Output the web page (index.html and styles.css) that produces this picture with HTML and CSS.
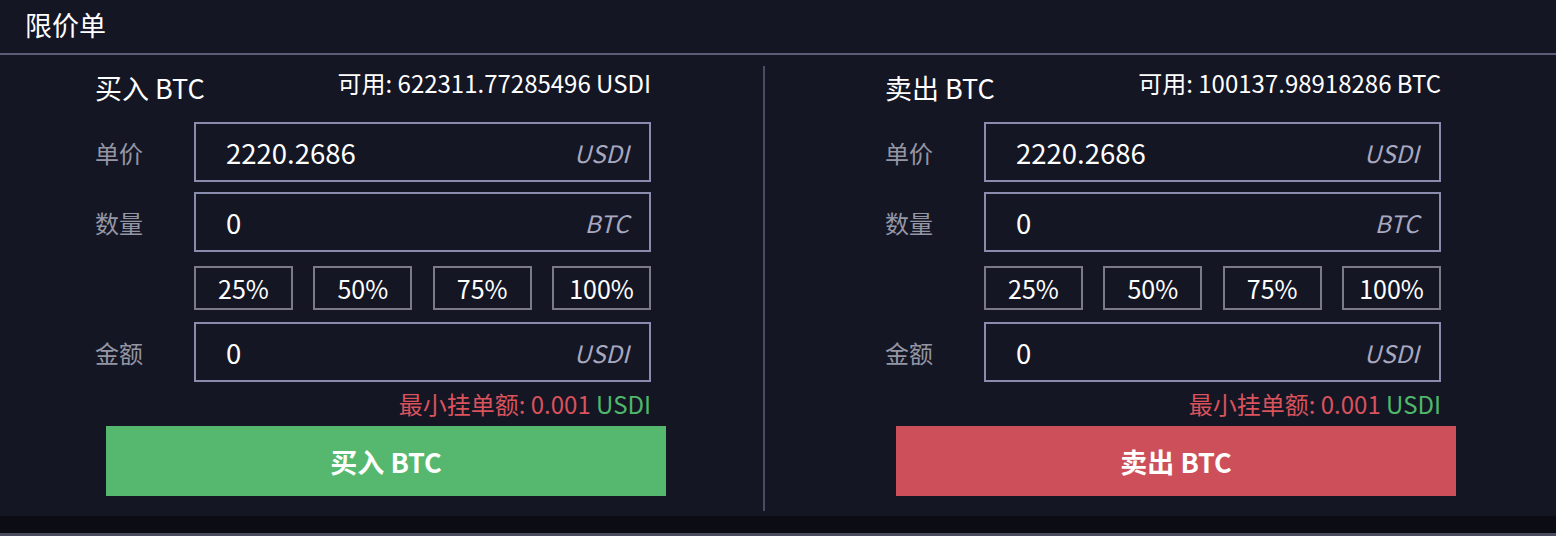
FILE: index.html
```html
<!DOCTYPE html>
<html lang="zh">
<head>
<meta charset="utf-8">
<title>限价单</title>
<link rel="stylesheet" href="styles.css">
</head>
<body>
<div class="page">
  <div class="header">限价单</div>
  <div class="main">
    <section class="side side-buy">
      <div class="title-row">
        <div class="title">买入 BTC</div>
        <div class="avail">可用: 622311.77285496 USDI</div>
      </div>
      <div class="row">
        <div class="label">单价</div>
        <div class="field"><span class="val">2220.2686</span><span class="unit">USDI</span></div>
      </div>
      <div class="row row-gap">
        <div class="label">数量</div>
        <div class="field"><span class="val">0</span><span class="unit">BTC</span></div>
      </div>
      <div class="pct-row">
        <div class="pct">25%</div>
        <div class="pct">50%</div>
        <div class="pct">75%</div>
        <div class="pct">100%</div>
      </div>
      <div class="row row-amount">
        <div class="label">金额</div>
        <div class="field"><span class="val">0</span><span class="unit">USDI</span></div>
      </div>
      <div class="min"><span class="min-red">最小挂单额: 0.001</span> <span class="min-green">USDI</span></div>
      <div class="btn btn-buy">买入 BTC</div>
    </section>
    <div class="divider"></div>
    <section class="side side-sell">
      <div class="title-row">
        <div class="title">卖出 BTC</div>
        <div class="avail">可用: 100137.98918286 BTC</div>
      </div>
      <div class="row">
        <div class="label">单价</div>
        <div class="field"><span class="val">2220.2686</span><span class="unit">USDI</span></div>
      </div>
      <div class="row row-gap">
        <div class="label">数量</div>
        <div class="field"><span class="val">0</span><span class="unit">BTC</span></div>
      </div>
      <div class="pct-row">
        <div class="pct">25%</div>
        <div class="pct">50%</div>
        <div class="pct">75%</div>
        <div class="pct">100%</div>
      </div>
      <div class="row row-amount">
        <div class="label">金额</div>
        <div class="field"><span class="val">0</span><span class="unit">USDI</span></div>
      </div>
      <div class="min"><span class="min-red">最小挂单额: 0.001</span> <span class="min-green">USDI</span></div>
      <div class="btn btn-sell">卖出 BTC</div>
    </section>
  </div>
  <div class="footer-band"></div>
  <div class="footer-line"></div>
</div>
</body>
</html>
```

FILE: styles.css
```css
* { box-sizing: border-box; }
html, body {
  margin: 0;
  padding: 0;
  background: #141624;
  font-family: "Noto Sans CJK SC", "Noto Sans", sans-serif;
  color: #ffffff;
}
.page {
  width: 1556px;
  height: 536px;
  overflow: hidden;
  display: flex;
  flex-direction: column;
}
.header {
  height: 55px;
  padding-left: 25px;
  font-size: 27px;
  line-height: 50px;
  color: #ffffff;
  border-bottom: 2px solid #5a5c78;
}
.main {
  height: 461px;
  display: flex;
}
.side {
  display: flex;
  flex-direction: column;
  width: 763px;
}
.side-buy { padding-left: 95px; }
.side-sell { padding-left: 120px; width: 791px; }
.divider {
  width: 2px;
  margin-top: 11px;
  height: 445px;
  background: #4a4c66;
}
.title-row {
  width: 556px;
  height: 67px;
  display: flex;
  justify-content: space-between;
  align-items: flex-start;
}
.title {
  margin-top: 16px;
  font-size: 27px;
  line-height: 34px;
}
.avail {
  margin-top: 13px;
  font-size: 24px;
  line-height: 30px;
}
.row {
  display: flex;
  align-items: center;
  height: 60px;
}
.row-gap { margin-top: 10px; }
.row-amount { margin-top: 12px; }
.label {
  width: 99px;
  font-size: 24px;
  color: #9496a4;
}
.field {
  width: 457px;
  height: 60px;
  border: 2px solid #8a8cae;
  display: flex;
  align-items: center;
  justify-content: space-between;
  padding: 0 20px 0 30px;
}
.val {
  font-size: 27.5px;
  color: #ffffff;
}
.unit {
  font-size: 24px;
  font-style: italic;
  color: #a8a8c0;
}
.pct-row {
  margin-top: 14px;
  margin-left: 99px;
  width: 457px;
  height: 44px;
  display: flex;
  justify-content: space-between;
}
.pct {
  width: 99px;
  height: 44px;
  border: 2px solid #7a7a88;
  display: flex;
  align-items: center;
  justify-content: center;
  font-size: 25px;
  color: #ffffff;
}
.min {
  width: 556px;
  text-align: right;
  font-size: 24px;
  line-height: 30px;
  margin-top: 7px;
}
.min-red { color: #d9525c; }
.min-green { color: #4fb86a; }
.btn {
  margin-top: 7px;
  margin-left: 11px;
  width: 560px;
  height: 70px;
  display: flex;
  align-items: center;
  justify-content: center;
  font-size: 27px;
  font-weight: bold;
  color: #ffffff;
}
.btn-buy { background: #55b86e; }
.btn-sell { background: #cc4f59; }
.footer-band {
  height: 17px;
  background: #0c0d14;
}
.footer-line {
  height: 3px;
  background: #4a4c60;
}
```
